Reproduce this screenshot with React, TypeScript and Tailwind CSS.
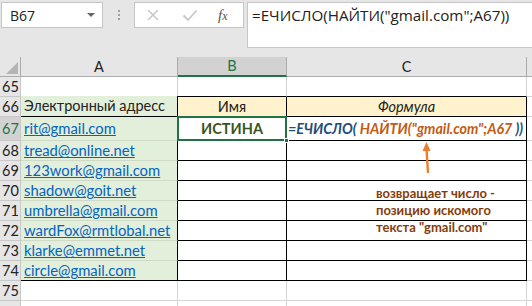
import React from "react";

const grid = "'Lato', 'Noto Sans', sans-serif";
const ui = "'Open Sans', 'Noto Sans', sans-serif";

const emails = [
  "tread@online.net",
  "123work@gmail.com",
  "shadow@goit.net",
  "umbrella@gmail.com",
  "wardFox@rmtlobal.net",
  "klarke@emmet.net",
  "circle@gmail.com",
];

const RowNum = ({ n, active }: { n?: number; active?: boolean }) => (
  <div
    className={`w-[21px] shrink-0 border-r border-b border-[#c8c8c8] flex items-center pl-[2px] text-[14.5px] ${
      active ? "bg-[#d2d2d2] text-[#217346]" : "bg-[#e6e6e6] text-[#222]"
    }`}
  >
    {n}
  </div>
);

const Tail = () => <div className="flex-1 border-b border-[#d4d4d4]" />;

const App = () => {
  return (
    <div className="w-[532px] h-[306px] overflow-hidden bg-white relative" style={{ fontFamily: grid }}>
      {/* toolbar */}
      <div className="h-[57px] bg-[#e6e6e6] flex items-start pt-[2px] pl-[1px]">
        <div className="w-[102px] h-[26px] bg-white border border-[#c6c6c6] flex items-center justify-between pl-[8px] pr-[7px]" style={{ fontFamily: ui }}>
          <span className="text-[14px] text-[#222]">B67</span>
          <span className="w-0 h-0 border-l-[4px] border-r-[4px] border-t-[4px] border-l-transparent border-r-transparent border-t-[#666]" />
        </div>
        <div className="w-[31px] flex flex-col items-center gap-[2px] pt-[8px]">
          <span className="w-[2px] h-[2px] bg-[#a0a0a0]" />
          <span className="w-[2px] h-[2px] bg-[#a0a0a0]" />
          <span className="w-[2px] h-[2px] bg-[#a0a0a0]" />
        </div>
        <div className="w-[110px] h-[26px] bg-white border border-[#c6c6c6] flex items-center pl-[11px]">
          <svg width="14" height="14" viewBox="0 0 14 14" className="mr-[22px]">
            <path d="M2 2 L12 12 M12 2 L2 12" stroke="#c8c8c8" strokeWidth="1.6" />
          </svg>
          <svg width="16" height="14" viewBox="0 0 16 14" className="mr-[20px]">
            <path d="M1.5 7.5 L6 12 L14.5 2.5" stroke="#c8c8c8" strokeWidth="1.8" fill="none" />
          </svg>
          <span className="italic text-[15px] text-[#555] leading-none" style={{ fontFamily: "'Liberation Serif', serif" }}>
            f<span className="text-[12px]">x</span>
          </span>
        </div>
        <div className="ml-[3px] flex-1 h-[46px] bg-white border border-[#c6c6c6] border-r-0 pl-[4px] pt-[1px] text-[15.2px] text-[#222]" style={{ fontFamily: ui }}>
          =ЕЧИСЛО(НАЙТИ("gmail.com";A67))
        </div>
      </div>

      {/* column headers */}
      <div className="h-[20px] flex bg-[#e6e6e6] text-[14.5px] text-[#222]">
        <div className="w-[21px] border-r border-b border-[#ababab] relative">
          <svg width="12" height="12" viewBox="0 0 12 12" className="absolute right-[2px] bottom-[2px]">
            <path d="M12 0 L12 12 L0 12 Z" fill="#b4b4b4" />
          </svg>
        </div>
        <div className="w-[157px] border-r border-b border-[#ababab] flex items-center justify-center">A</div>
        <div className="w-[109px] bg-[#d2d2d2] border-r border-[#ababab] border-b-2 border-b-[#217346] flex items-center justify-center text-[#217346]">
          B
        </div>
        <div className="w-[240px] border-r border-b border-[#ababab] flex items-center justify-center">C</div>
        <div className="flex-1 border-b border-[#ababab]" />
      </div>

      {/* row 65 */}
      <div className="h-[20px] flex">
        <RowNum n={65} />
        <div className="w-[157px] border-r border-b border-[#d4d4d4]" />
        <div className="w-[109px] border-r border-b border-b-black border-[#d4d4d4]" />
        <div className="w-[240px] border-r border-b border-b-black border-[#d4d4d4]" />
        <Tail />
      </div>

      {/* row 66 */}
      <div className="h-[20px] flex text-[14.5px] text-[#222]">
        <RowNum n={66} />
        <div className="w-[157px] bg-[#e2efda] border-r border-b border-black flex items-center pl-[3px] -mt-px h-[21px]">
          Электронный адресс
        </div>
        <div className="w-[109px] bg-[#fff2cc] border-r border-b border-black flex items-center justify-center">Имя</div>
        <div className="w-[240px] bg-[#fff2cc] border-r border-b border-black flex items-center justify-center italic">
          Формула
        </div>
        <Tail />
      </div>

      {/* row 67 */}
      <div className="h-[24px] flex text-[14.8px]">
        <RowNum n={67} active />
        <div className="w-[157px] bg-[#e2efda] border-r border-b border-r-black border-b-[#cfd9c7] flex items-center pl-[3px]">
          <span className="text-[#0563c1] underline">rit@gmail.com</span>
        </div>
        <div className="w-[109px] border-r border-b border-black relative flex items-center justify-center font-bold text-[14.5px] text-[#375623]">
          <div className="absolute -left-px -top-px w-[110px] h-[25px] border-2 border-[#217346]" />
          <div className="absolute -right-[3px] -bottom-[3px] w-[5px] h-[5px] bg-[#217346] border border-white" />
          ИСТИНА
        </div>
        <div className="w-[240px] border-r border-b border-black flex items-center pl-[1px] italic font-bold whitespace-nowrap overflow-hidden text-[14.3px]">
          <span className="text-[#1f4e79]">=ЕЧИСЛО(&nbsp;</span>
          <span className="text-[#c55a11]">НАЙТИ("gmail.com";A67</span>
          <span className="text-[#1f4e79]">&nbsp;))</span>
        </div>
        <Tail />
      </div>

      {/* rows 68-74 */}
      {emails.map((e, i) => (
        <div key={e} className="h-[20px] flex text-[14.8px]">
          <RowNum n={68 + i} />
          <div
            className={`w-[157px] bg-[#e2efda] border-r border-b border-r-black flex items-center pl-[3px] ${
              i === emails.length - 1 ? "border-b-black" : "border-b-[#cfd9c7]"
            }`}
          >
            <span className="text-[#0563c1] underline">{e}</span>
          </div>
          <div className="w-[109px] border-r border-b border-black" />
          <div className="w-[240px] border-r border-b border-black" />
          <Tail />
        </div>
      ))}

      {/* row 75, 76 */}
      <div className="h-[20px] flex">
        <RowNum n={75} />
        <div className="w-[157px] border-r border-b border-[#d4d4d4]" />
        <div className="w-[109px] border-r border-b border-[#d4d4d4]" />
        <div className="w-[240px] border-r border-b border-[#d4d4d4]" />
        <Tail />
      </div>
      <div className="h-[20px] flex">
        <RowNum />
        <div className="w-[157px] border-r border-[#d4d4d4]" />
        <div className="w-[109px] border-r border-[#d4d4d4]" />
        <div className="w-[240px] border-r border-[#d4d4d4]" />
        <div className="flex-1" />
      </div>

      {/* annotation */}
      <svg width="14" height="36" viewBox="0 0 14 36" className="absolute left-[420px] top-[140px]">
        <path d="M6.5 2 L2.5 11 L10.5 11 Z" fill="#ed7d31" />
        <path d="M6.6 10 L8 33" stroke="#ed7d31" strokeWidth="2.4" />
      </svg>
      <div
        className="absolute left-[376px] top-[185px] text-[13px] leading-[17px] font-bold text-[#843c0c]"
        style={{ fontFamily: grid }}
      >
        возвращает число -
        <br />
        позицию искомого
        <br />
        текста "gmail.com"
      </div>
    </div>
  );
};

export default App;
